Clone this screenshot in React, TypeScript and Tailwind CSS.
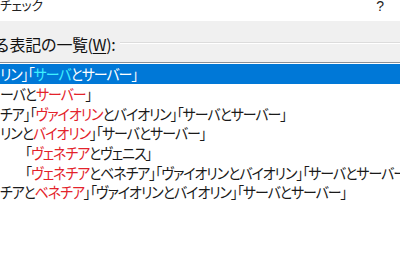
import React from "react";

const R = ({ children }: { children: React.ReactNode }) => (
  <span className="text-[#e3232b]">{children}</span>
);

const T = ({ children }: { children: React.ReactNode }) => (
  <span className="inline-block origin-left scale-x-[0.93]">{children}</span>
);

export default function App() {
  const font = { fontFamily: '"Meiryo UI","Noto Sans CJK JP",sans-serif' };
  return (
    <div className="w-[400px] h-[267px] overflow-hidden bg-white relative" style={font}>
      {/* title bar */}
      <div className="h-[21px] bg-white flex items-start justify-between">
        <div className="text-[13px] leading-[13px] mt-[-2px] text-[#222] [font-feature-settings:'palt'] tracking-[-0.5px]">
          チェック
        </div>
        <div
          className="text-[14px] leading-[14px] mt-[-1px] mr-[16px] text-[#222]"
          style={{ fontFamily: '"Liberation Sans",sans-serif' }}
        >
          ?
        </div>
      </div>
      {/* gray band */}
      <div className="h-[41px] bg-[#f0f0f0] flex items-center overflow-hidden">
        <div className="text-[16px] leading-[16px] text-[#111] whitespace-nowrap mt-[4px] ml-[-6px] tracking-[-0.4px]">
          る表記の一覧(<span className="underline underline-offset-2">W</span>):
        </div>
        <div className="flex-1 ml-[5px] mt-[2px] flex flex-col">
          <div className="h-px bg-[#dcdcdc]" />
          <div className="h-px bg-white" />
        </div>
      </div>
      {/* list */}
      <div className="border-t border-[#8b9097] bg-white">
        <div className="pt-px text-[15px] leading-[19.7px] text-[#1a1a1a] whitespace-nowrap [font-feature-settings:'palt'] tracking-[-1.1px]">
          <div className="h-[20px] bg-[#0078d7] text-white flex items-center">
            <T>
              リン」「<span className="text-[#3ff0ff]">サーバ</span>とサーバー」
            </T>
          </div>
          <div className="h-[19.7px] flex items-center">
            <T>
              ーバと<R>サーバー</R>」
            </T>
          </div>
          <div className="h-[19.7px] flex items-center">
            <T>
              チア」「<R>ヴァイオリン</R>とバイオリン」「サーバとサーバー」
            </T>
          </div>
          <div className="h-[19.7px] flex items-center">
            <T>
              リンと<R>バイオリン</R>」「サーバとサーバー」
            </T>
          </div>
          <div className="h-[19.7px] flex items-center pl-[25px]">
            <T>
              「<R>ヴェネチア</R>とヴェニス」
            </T>
          </div>
          <div className="h-[19.7px] flex items-center pl-[25px]">
            <T>
              「<R>ヴェネチア</R>とベネチア」「ヴァイオリンとバイオリン」「サーバとサーバー」
            </T>
          </div>
          <div className="h-[19.7px] flex items-center">
            <T>
              チアと<R>ベネチア</R>」「ヴァイオリンとバイオリン」「サーバとサーバー」
            </T>
          </div>
        </div>
      </div>
    </div>
  );
}
